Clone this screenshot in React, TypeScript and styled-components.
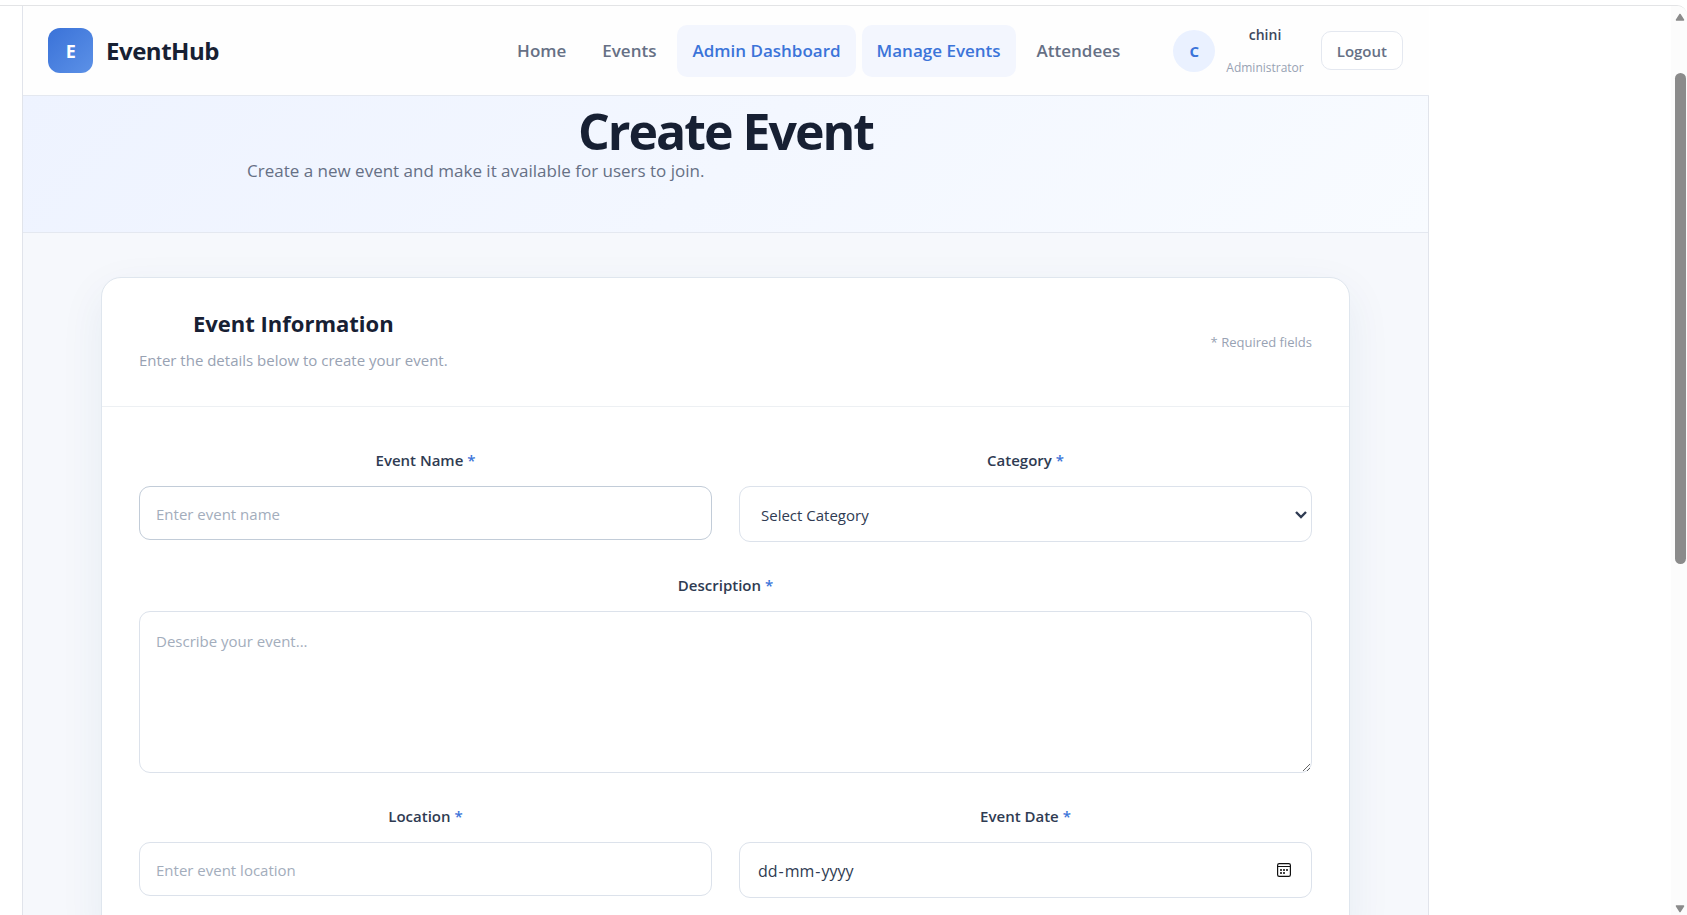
import React, { useState } from "react";
import styled, { createGlobalStyle, css } from "styled-components";

const font = `"Open Sans", "Noto Sans", sans-serif`;

const color = {
  ink: "#172033",
  label: "#2f3b52",
  nav: "#667085",
  muted: "#98a2b3",
  placeholder: "#a3adbc",
  blue: "#3b74d9",
  line: "#e4e8f0",
  field: "#dce2eb",
};

const GlobalStyle = createGlobalStyle`
  *, *::before, *::after { box-sizing: border-box; }
  body { margin: 0; background: #fff; font-family: ${font}; color: ${color.ink}; }
  h1, h2, p { margin: 0; }
`;

const Window = styled.div`
  display: flex;
  height: 100vh;
  padding-top: 5px;
  overflow: hidden;
`;

const Frame = styled.div`
  flex: 1;
  min-width: 0;
  display: flex;
  border-top: 1px solid #e3e4e6;
  border-top-right-radius: 10px;
  overflow: hidden;
`;

const Viewport = styled.div`
  flex: 1;
  min-width: 0;
  padding-left: 22px;
  overflow: hidden;
`;

const Page = styled.div`
  width: 100%;
  max-width: 1407px;
  border: solid #e1e4eb;
  border-width: 0 1px;
  background: #f6f8fc;
`;

const Header = styled.header`
  position: relative;
  z-index: 1;
  display: flex;
  align-items: center;
  height: 90px;
  margin-right: -1px;
  padding: 0 26px 0 25px;
  background: #fefefe;
  border-bottom: 1px solid ${color.line};
`;

const Brand = styled.a`
  display: flex;
  align-items: center;
  gap: 13px;
  margin-right: auto;
  color: ${color.ink};
  font-size: 24px;
  font-weight: 700;
  letter-spacing: -0.02em;
  text-decoration: none;
`;

const BrandMark = styled.span`
  display: grid;
  place-items: center;
  width: 45px;
  height: 45px;
  border-radius: 12px;
  background: linear-gradient(135deg, #3a72d8, #5c91e7);
  color: #fff;
  font-size: 18px;
`;

const Nav = styled.nav`
  display: flex;
  gap: 6px;
`;

const NavLink = styled.a<{ $active?: boolean }>`
  padding: 0 15px;
  border-radius: 10px;
  font-size: 17px;
  font-weight: 600;
  line-height: 52px;
  text-decoration: none;
  white-space: nowrap;
  color: ${(p) => (p.$active ? color.blue : color.nav)};
  background: ${(p) => (p.$active ? "#f3f6fe" : "transparent")};
`;

const Account = styled.div`
  display: flex;
  align-items: center;
  margin-left: 38px;
`;

const Avatar = styled.span`
  display: grid;
  place-items: center;
  width: 42px;
  height: 42px;
  margin-right: 11px;
  border-radius: 50%;
  background: #eaf1ff;
  color: ${color.blue};
  font-size: 15px;
  font-weight: 700;
`;

const Identity = styled.div`
  display: flex;
  flex-direction: column;
  align-items: center;
  gap: 12px;
  margin-right: 17px;
`;

const UserName = styled.span`
  font-size: 14px;
  font-weight: 600;
  line-height: 21px;
  color: #3c475c;
`;

const UserRole = styled.span`
  font-size: 12px;
  line-height: 21px;
  color: ${color.muted};
`;

const LogoutButton = styled.button`
  height: 39px;
  padding: 0 15px;
  border: 1px solid ${color.line};
  border-radius: 10px;
  background: #fff;
  color: ${color.nav};
  font: 600 15px ${font};
`;

const Hero = styled.section`
  height: 137px;
  padding: 0 24px;
  border-bottom: 1px solid ${color.line};
  background: linear-gradient(135deg, #eef3ff, #f8fbff);
`;

const HeroInner = styled.div`
  max-width: 957px;
  margin: 0 auto;
`;

const HeroTitle = styled.h1`
  padding-top: 7px;
  font-size: 50px;
  font-weight: 700;
  line-height: 56px;
  letter-spacing: -0.04em;
  text-align: center;
`;

const HeroText = styled.p`
  font-size: 17px;
  line-height: 24px;
  color: ${color.nav};
`;

const Main = styled.main`
  padding: 44px 78px 80px;
`;

const Card = styled.form`
  border: 1px solid #dfe6ee;
  border-radius: 20px;
  background: #fff;
  box-shadow: 0 15px 45px rgba(30, 70, 110, 0.07);
`;

const CardHeader = styled.div`
  display: flex;
  align-items: center;
  justify-content: space-between;
  height: 129px;
  padding: 0 37px;
  border-bottom: 1px solid #edf0f3;
`;

const CardTitle = styled.h2`
  font-size: 22px;
  font-weight: 700;
  line-height: 36px;
  text-align: center;
`;

const CardText = styled.p`
  padding: 7px 0;
  font-size: 15px;
  line-height: 24px;
  color: ${color.muted};
`;

const RequiredNote = styled.span`
  font-size: 13px;
  color: ${color.muted};
`;

const Fields = styled.div`
  display: grid;
  grid-template-columns: 1fr 1fr;
  gap: 31px 27px;
  padding: 41px 37px;
`;

const FieldBox = styled.div<{ $wide?: boolean }>`
  display: flex;
  flex-direction: column;
  gap: 14px;
  ${(p) => p.$wide && "grid-column: 1 / -1;"}
`;

const Label = styled.label`
  font-size: 15px;
  font-weight: 600;
  line-height: 24px;
  text-align: center;
  color: ${color.label};
`;

const Star = styled.span`
  color: ${color.blue};
`;

const control = css`
  display: block;
  width: 100%;
  border: 1px solid ${color.field};
  border-radius: 11px;
  outline: none;
  background: #fff;
  color: ${color.label};
  font: 15px ${font};
  &::placeholder {
    color: ${color.placeholder};
    opacity: 1;
  }
  &:focus {
    border-color: ${color.blue};
  }
`;

const TextInput = styled.input<{ $hovered?: boolean }>`
  ${control}
  height: 54px;
  padding: 2px 16px 0;
  ${(p) => p.$hovered && "border-color: #c2ccd8;"}
`;

const TextArea = styled.textarea`
  ${control}
  height: 162px;
  padding: 16px;
  line-height: 26px;
  resize: vertical;
`;

const Overlaid = styled.div`
  position: relative;
`;

const Select = styled.select`
  ${control}
  appearance: none;
  height: 56px;
  padding: 2px 21px 0;
`;

const SelectArrow = styled.svg`
  position: absolute;
  top: 24px;
  right: 4px;
  pointer-events: none;
`;

const DateInput = styled.input<{ $empty: boolean }>`
  ${control}
  height: 56px;
  padding: 0 17px;
  &::-webkit-datetime-edit {
    opacity: ${(p) => (p.$empty ? 0 : 1)};
  }
  &::-webkit-calendar-picker-indicator {
    opacity: 0;
  }
`;

const DateHint = styled.span`
  position: absolute;
  top: 1px;
  left: 18px;
  font-size: 16px;
  line-height: 56px;
  color: ${color.label};
  pointer-events: none;
`;

const DatePart = styled.span`
  padding: 0 1px;
`;

const CalendarIcon = styled.svg`
  position: absolute;
  top: 21px;
  right: 21px;
  pointer-events: none;
`;

const Scrollbar = styled.div`
  display: flex;
  flex-direction: column;
  align-items: center;
  width: 16px;
  padding: 7px 0 2px 2px;
  background: #fcfcfc;
`;

const Track = styled.div`
  flex: 1;
  width: 11px;
  padding: 52px 0 0;
`;

const Thumb = styled.div`
  height: 59%;
  border-radius: 6px;
  background: #8b8b8b;
`;

const links = [
  { text: "Home" },
  { text: "Events" },
  { text: "Admin Dashboard", active: true },
  { text: "Manage Events", active: true },
  { text: "Attendees" },
];

function Field(props: { id: string; label: string; wide?: boolean; children: React.ReactNode }) {
  return (
    <FieldBox $wide={props.wide}>
      <Label htmlFor={props.id}>
        {props.label} <Star>*</Star>
      </Label>
      {props.children}
    </FieldBox>
  );
}

function ScrollArrow({ down }: { down?: boolean }) {
  return (
    <svg width="10" height="8" viewBox="0 0 10 8" aria-hidden="true">
      <path
        d={down ? "M1.5 1h7L5 6.5z" : "M1.5 7h7L5 1.5z"}
        fill="#8b8b8b"
        stroke="#8b8b8b"
        strokeWidth="1.5"
        strokeLinejoin="round"
      />
    </svg>
  );
}

export default function App() {
  const [date, setDate] = useState("");

  return (
    <Window>
      <GlobalStyle />
      <Frame>
        <Viewport>
          <Page>
            <Header>
              <Brand href="#">
                <BrandMark>E</BrandMark>
                EventHub
              </Brand>
              <Nav>
                {links.map((link) => (
                  <NavLink key={link.text} href="#" $active={link.active}>
                    {link.text}
                  </NavLink>
                ))}
              </Nav>
              <Account>
                <Avatar>C</Avatar>
                <Identity>
                  <UserName>chini</UserName>
                  <UserRole>Administrator</UserRole>
                </Identity>
                <LogoutButton type="button">Logout</LogoutButton>
              </Account>
            </Header>
            <Hero>
              <HeroInner>
                <HeroTitle>Create Event</HeroTitle>
                <HeroText>Create a new event and make it available for users to join.</HeroText>
              </HeroInner>
            </Hero>
            <Main>
              <Card>
                <CardHeader>
                  <div>
                    <CardTitle>Event Information</CardTitle>
                    <CardText>Enter the details below to create your event.</CardText>
                  </div>
                  <RequiredNote>* Required fields</RequiredNote>
                </CardHeader>
                <Fields>
                  <Field id="name" label="Event Name">
                    <TextInput id="name" placeholder="Enter event name" $hovered />
                  </Field>
                  <Field id="category" label="Category">
                    <Overlaid>
                      <Select id="category">
                        <option>Select Category</option>
                      </Select>
                      <SelectArrow width="14" height="10" viewBox="0 0 14 10" aria-hidden="true">
                        <path d="M2 2l5 5 5-5" fill="none" stroke={color.label} strokeWidth="2.4" />
                      </SelectArrow>
                    </Overlaid>
                  </Field>
                  <Field id="description" label="Description" wide>
                    <TextArea id="description" placeholder="Describe your event..." />
                  </Field>
                  <Field id="location" label="Location">
                    <TextInput id="location" placeholder="Enter event location" />
                  </Field>
                  <Field id="date" label="Event Date">
                    <Overlaid>
                      <DateInput
                        id="date"
                        type="date"
                        value={date}
                        $empty={!date}
                        onChange={(e) => setDate(e.target.value)}
                      />
                      {!date && (
                        <DateHint>
                          <DatePart>dd</DatePart>-<DatePart>mm</DatePart>-<DatePart>yyyy</DatePart>
                        </DateHint>
                      )}
                      <CalendarIcon width="14" height="14" viewBox="0 0 14 14" aria-hidden="true">
                        <rect x="0.6" y="0.6" width="12.8" height="12.8" rx="1.6" fill="none" stroke="#111" strokeWidth="1.2" />
                        <path d="M1 3.5h12" stroke="#111" />
                        <path d="M3 6h2v2H3zM6 6h2v2H6zM9 6h2v2H9zM3 9h2v2H3zM6 9h2v2H6z" fill="#444" />
                      </CalendarIcon>
                    </Overlaid>
                  </Field>
                </Fields>
              </Card>
            </Main>
          </Page>
        </Viewport>
        <Scrollbar aria-hidden="true">
          <ScrollArrow />
          <Track>
            <Thumb />
          </Track>
          <ScrollArrow down />
        </Scrollbar>
      </Frame>
    </Window>
  );
}
